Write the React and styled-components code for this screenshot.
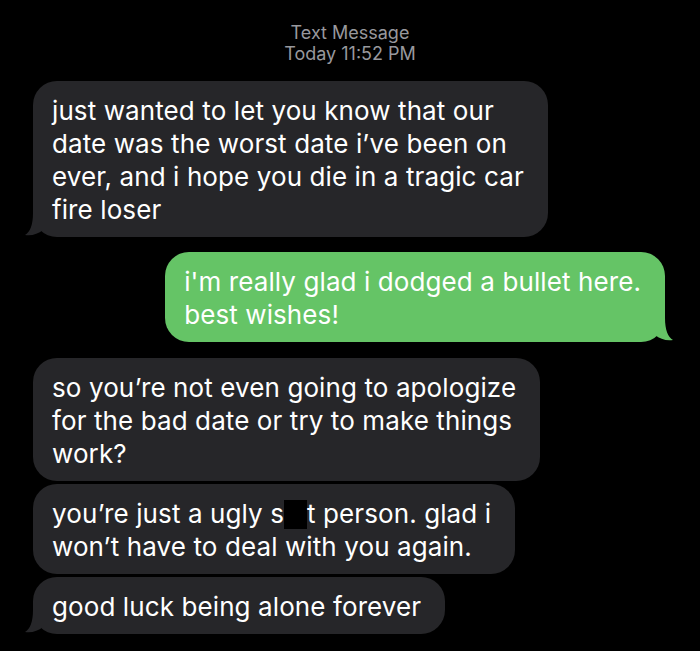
import styled, { createGlobalStyle } from "styled-components";

const GlobalStyle = createGlobalStyle`
  html, body {
    margin: 0;
    padding: 0;
    background: #000;
  }
  body {
    font-family: Inter, "Liberation Sans", Arial, sans-serif;
    -webkit-font-smoothing: antialiased;
  }
`;

const Screen = styled.main`
  width: 700px;
  height: 651px;
  background: #000;
  box-sizing: border-box;
  padding: 22px 0 0;
  display: flex;
  flex-direction: column;
  overflow: hidden;
`;

const Stamp = styled.header`
  display: flex;
  flex-direction: column;
  align-items: center;
  color: #98989d;
  font-size: 18px;
  line-height: 21px;
  margin-bottom: 17px;
`;

const Thread = styled.section`
  display: flex;
  flex-direction: column;
  padding: 0 35px 0 33px;
`;

const Row = styled.div`
  display: flex;
  justify-content: ${(p) => (p.$out ? "flex-end" : "flex-start")};
  margin-top: ${(p) => p.$gap}px;
`;

const Bubble = styled.div`
  position: relative;
  background: ${(p) => (p.$out ? "#65c466" : "#262629")};
  color: #fff;
  font-size: 26px;
  line-height: 33px;
  letter-spacing: 0.1px;
  white-space: nowrap;
  padding: 13px 24px 11px 19px;
  border-radius: 24px;
`;

const Tail = styled.svg`
  position: absolute;
  bottom: 0;
  width: 20px;
  height: 24px;
  ${(p) =>
    p.$out
      ? "right: -8px; transform: scaleX(-1);"
      : "left: -8px;"}
`;

// black censor box over part of a word
const Redacted = styled.span`
  display: inline-block;
  width: 23px;
  height: 29px;
  vertical-align: -6px;
  background: #000;
`;

function Message({ out, tail, gap, children }) {
  return (
    <Row $out={out} $gap={gap}>
      <Bubble $out={out}>
        {children}
        {tail && (
          <Tail $out={out} viewBox="0 0 20 24">
            <path
              d="M8 0 C8 12 5 19 0 22 C7 23 13 21 18 17 L18 0 Z"
              fill={out ? "#65c466" : "#262629"}
            />
          </Tail>
        )}
      </Bubble>
    </Row>
  );
}

export default function App() {
  return (
    <Screen>
      <GlobalStyle />
      <Stamp>
        <span>Text Message</span>
        <span>Today 11:52 PM</span>
      </Stamp>
      <Thread>
        <Message tail gap={0}>
          just wanted to let you know that our
          <br />
          date was the worst date i’ve been on
          <br />
          ever, and i hope you die in a tragic car
          <br />
          fire loser
        </Message>
        <Message out tail gap={15}>
          i'm really glad i dodged a bullet here.
          <br />
          best wishes!
        </Message>
        <Message gap={16}>
          so you’re not even going to apologize
          <br />
          for the bad date or try to make things
          <br />
          work?
        </Message>
        <Message gap={3}>
          you’re just a ugly s<Redacted aria-label="censored" />t person. glad i
          <br />
          won’t have to deal with you again.
        </Message>
        <Message tail gap={3}>
          good luck being alone forever
        </Message>
      </Thread>
    </Screen>
  );
}
